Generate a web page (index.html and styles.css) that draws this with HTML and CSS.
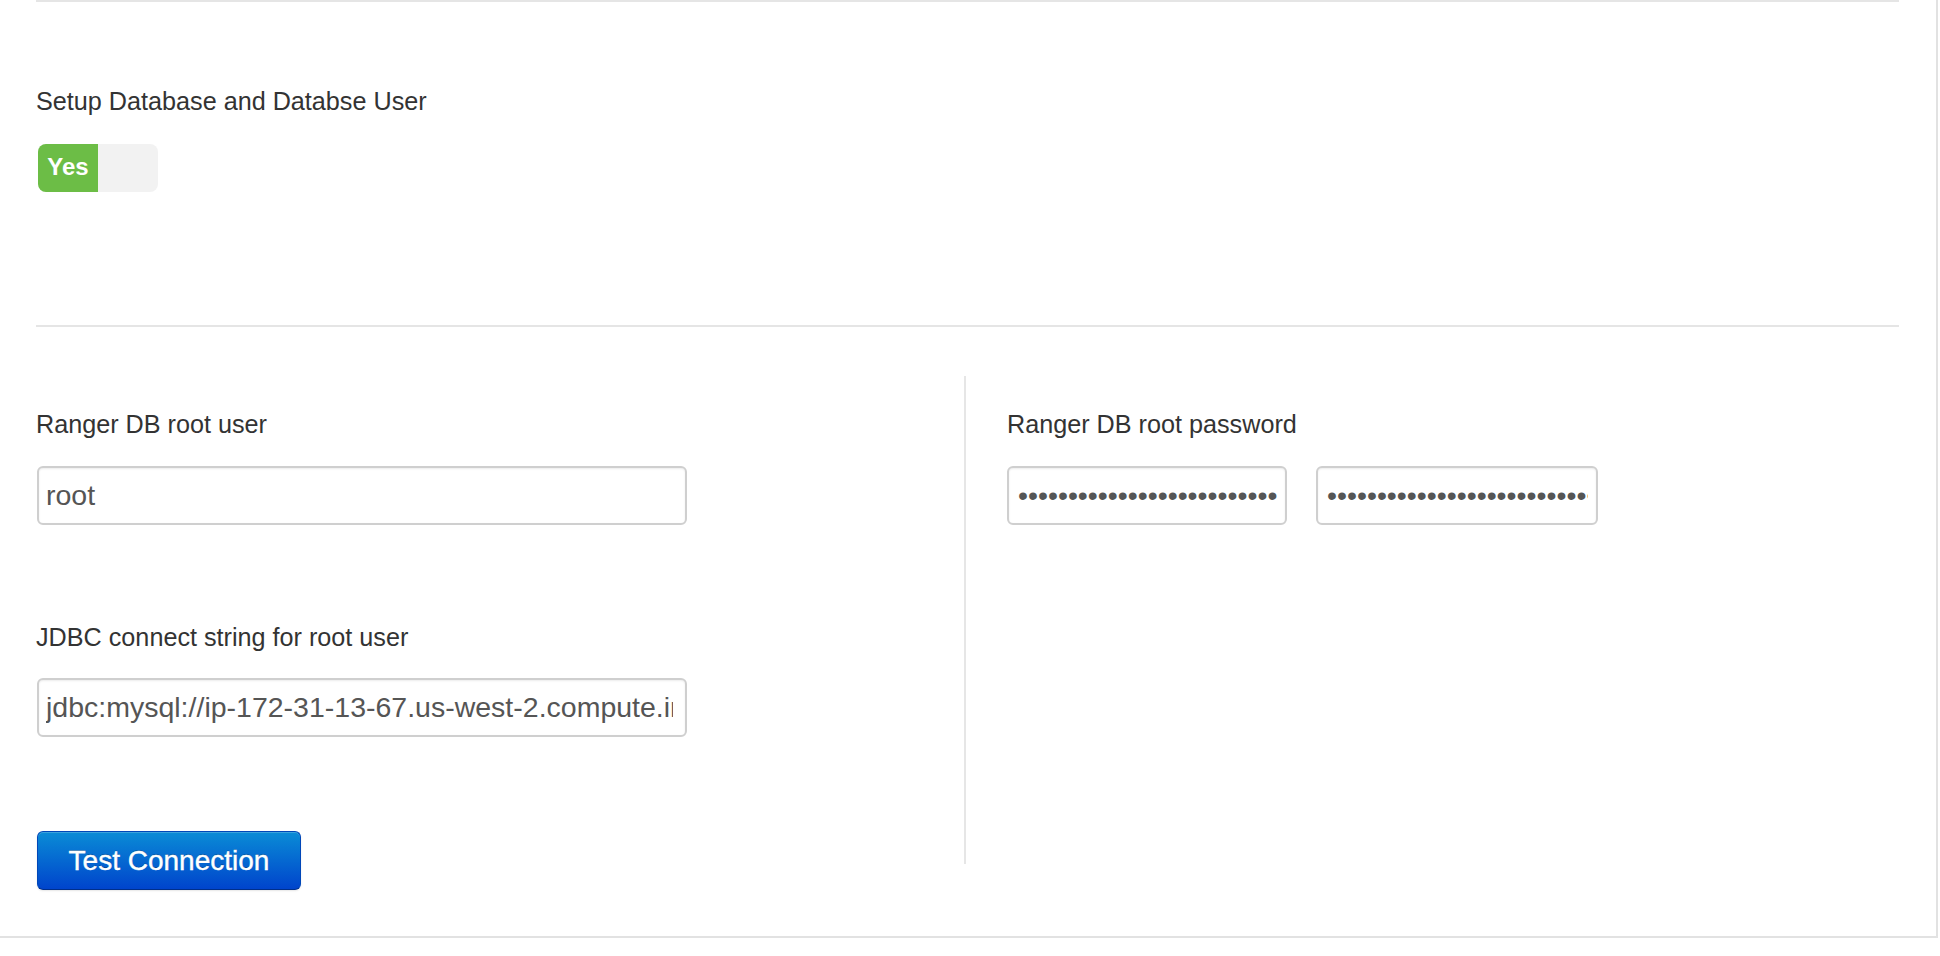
FILE: index.html
```html
<!DOCTYPE html>
<html>
<head>
<meta charset="utf-8">
<title>Ranger DB setup</title>
<link rel="stylesheet" href="styles.css">
</head>
<body>
<div class="panel">
  <section class="setup">
    <div class="field-label">Setup Database and Databse User</div>
    <div class="toggle"><span class="toggle-on">Yes</span><span class="toggle-off"></span></div>
  </section>
  <section class="db">
    <div class="col col-left">
      <div class="field-label">Ranger DB root user</div>
      <input class="text-input wide" type="text" value="root">
      <div class="field-label second">JDBC connect string for root user</div>
      <input class="text-input wide" type="text" value="jdbc:mysql://ip-172-31-13-67.us-west-2.compute.internal">
      <button class="btn-primary" type="button">Test Connection</button>
    </div>
    <div class="col col-right">
      <div class="field-label">Ranger DB root password</div>
      <div class="pw-row">
        <input class="text-input pw1" type="password" value="passwordpasswordpasswordpassword">
        <input class="text-input pw2" type="password" value="passwordpasswordpasswordpassword">
      </div>
    </div>
  </section>
</div>
</body>
</html>
```
FILE: styles.css
```css
html, body {
  margin: 0;
  padding: 0;
  background: #ffffff;
}
body {
  font-family: "Liberation Sans", Arial, Helvetica, sans-serif;
  color: #333333;
}
.panel {
  box-sizing: border-box;
  width: 1938px;
  height: 938px;
  border-right: 2px solid #e2e2e2;
  border-bottom: 2px solid #e2e2e2;
  padding: 0 37px 0 36px;
  background: #ffffff;
  overflow: hidden;
}
.field-label {
  font-size: 25.2px;
  line-height: 30px;
  height: 30px;
  color: #333333;
  white-space: nowrap;
}
.setup {
  border-top: 2px solid #e5e5e5;
  padding-top: 84px;
  padding-bottom: 133px;
}
.toggle {
  display: flex;
  width: 120px;
  height: 48px;
  margin-top: 28px;
  margin-left: 2px;
  border-radius: 8px;
  overflow: hidden;
  background: #f2f2f2;
}
.toggle-on {
  width: 60px;
  background: #6cbd46;
  color: #ffffff;
  font-size: 24px;
  font-weight: bold;
  line-height: 46px;
  text-align: center;
}
.toggle-off {
  flex: 1;
}
.db {
  border-top: 2px solid #e5e5e5;
  padding-top: 49px;
  display: flex;
  align-items: flex-start;
}
.col-left {
  width: 928px;
  padding-top: 33px;
  display: flex;
  flex-direction: column;
  align-items: flex-start;
}
.col-right {
  box-sizing: border-box;
  flex: 1;
  min-height: 488px;
  border-left: 2px solid #e6e6e6;
  padding-left: 41px;
  padding-top: 33px;
}
.text-input {
  box-sizing: border-box;
  display: block;
  height: 59px;
  margin: 27px 0 0 1px;
  padding: 0 12px 0 7px;
  border: 2px solid #cfcfcf;
  border-radius: 6px;
  background: #ffffff;
  box-shadow: inset 0 1px 2px rgba(0, 0, 0, 0.08);
  font-family: "Liberation Sans", Arial, Helvetica, sans-serif;
  font-size: 28.5px;
  color: #555555;
  outline: none;
}
.wide {
  width: 650px;
}
.field-label.second {
  margin-top: 97px;
}
.col-left .field-label.second + .text-input {
  margin-top: 26px;
}
.pw-row {
  display: flex;
  gap: 29px;
}
.pw-row .text-input {
  margin-left: 0;
  padding-left: 9px;
  padding-right: 8px;
}
.pw1 {
  width: 280px;
}
.pw2 {
  width: 282px;
}
.btn-primary {
  box-sizing: border-box;
  margin: 94px 0 0 1px;
  width: 264px;
  height: 59px;
  padding: 0;
  border: 1px solid #0047b8;
  border-bottom-color: #002f8a;
  border-radius: 6px;
  background: linear-gradient(to bottom, #0a8cd6 0%, #0044cc 100%);
  box-shadow: inset 0 1px 0 rgba(255, 255, 255, 0.2), 0 1px 2px rgba(0, 0, 0, 0.1);
  color: #ffffff;
  font-family: "Liberation Sans", Arial, Helvetica, sans-serif;
  font-size: 28px;
  -webkit-text-stroke: 0.4px #ffffff;
  text-shadow: 0 -1px 0 rgba(0, 0, 0, 0.25);
  cursor: pointer;
}
```
